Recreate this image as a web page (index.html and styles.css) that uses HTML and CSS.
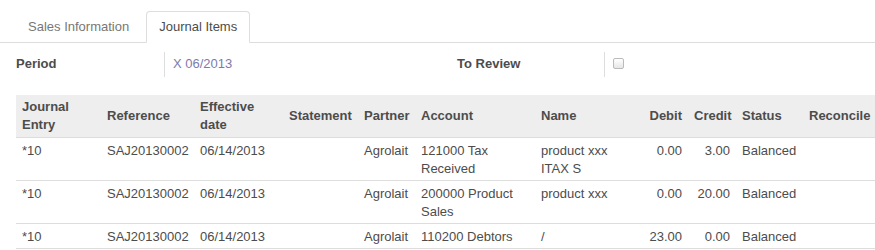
FILE: index.html
```html
<!DOCTYPE html>
<html lang="en">
<head>
  <meta charset="UTF-8">
  <title>Invoice - Journal Items</title>
  <link rel="stylesheet" href="styles.css">
</head>
<body>
  <ul class="tabs">
    <li><a href="#">Sales Information</a></li>
    <li class="active"><a href="#">Journal Items</a></li>
  </ul>

  <div class="fields">
    <div class="label">Period</div>
    <div class="value value-wide"><a href="#">X 06/2013</a></div>
    <div class="label label-second">To Review</div>
    <div class="value"><input type="checkbox" class="check" /></div>
  </div>

  <table class="grid">
    <colgroup>
      <col style="width: 85px">
      <col style="width: 93px">
      <col style="width: 89px">
      <col style="width: 75px">
      <col style="width: 57px">
      <col style="width: 120px">
      <col style="width: 105px">
      <col style="width: 48px">
      <col style="width: 48px">
      <col style="width: 67px">
      <col style="width: 72px">
    </colgroup>
    <thead>
      <tr>
        <th>Journal Entry</th>
        <th>Reference</th>
        <th>Effective date</th>
        <th>Statement</th>
        <th>Partner</th>
        <th>Account</th>
        <th>Name</th>
        <th class="num">Debit</th>
        <th class="num">Credit</th>
        <th>Status</th>
        <th>Reconcile</th>
      </tr>
    </thead>
    <tbody>
      <tr>
        <td>*10</td>
        <td>SAJ20130002</td>
        <td>06/14/2013</td>
        <td></td>
        <td>Agrolait</td>
        <td>121000 Tax Received</td>
        <td>product xxx ITAX S</td>
        <td class="num">0.00</td>
        <td class="num">3.00</td>
        <td>Balanced</td>
        <td></td>
      </tr>
      <tr>
        <td>*10</td>
        <td>SAJ20130002</td>
        <td>06/14/2013</td>
        <td></td>
        <td>Agrolait</td>
        <td>200000 Product Sales</td>
        <td>product xxx</td>
        <td class="num">0.00</td>
        <td class="num">20.00</td>
        <td>Balanced</td>
        <td></td>
      </tr>
      <tr>
        <td>*10</td>
        <td>SAJ20130002</td>
        <td>06/14/2013</td>
        <td></td>
        <td>Agrolait</td>
        <td>110200 Debtors</td>
        <td>/</td>
        <td class="num">23.00</td>
        <td class="num">0.00</td>
        <td>Balanced</td>
        <td></td>
      </tr>
    </tbody>
  </table>
</body>
</html>
```

FILE: styles.css
```css
* {
  box-sizing: border-box;
}

html, body {
  margin: 0;
  padding: 0;
  background: #fff;
  overflow: hidden;
}

body {
  font-family: "Liberation Sans", Arial, sans-serif;
  font-size: 13px;
  line-height: 18px;
  color: #4c4c4c;
}

a {
  text-decoration: none;
}

/* tabs */

.tabs {
  list-style: none;
  margin: 11px 0 0 0;
  padding: 0 0 0 15px;
  display: flex;
  border-bottom: 1px solid #ddd;
}

.tabs li {
  margin: 0 4px -1px 0;
}

.tabs a {
  display: block;
  padding: 6px 12px;
  border: 1px solid transparent;
  border-radius: 4px 4px 0 0;
  color: #777;
}

.tabs .active a {
  color: #4c4c4c;
  background: #fff;
  border-color: #ddd #ddd transparent;
}

/* form fields */

.fields {
  display: flex;
  align-items: center;
  padding: 8px 0 0 16px;
  height: 34px;
}

.label {
  width: 148px;
  font-weight: bold;
  color: #4c4c4c;
}

.label-second {
  width: 147px;
}

.value {
  height: 25px;
  display: flex;
  align-items: center;
  padding-left: 8px;
  border-left: 1px solid #ddd;
}

.value-wide {
  width: 293px;
}

.value a {
  color: #7c7bad;
}

.check {
  appearance: none;
  -webkit-appearance: none;
  width: 11px;
  height: 11px;
  margin: 0 0 2px 0;
  border: 1px solid #bbb;
  border-radius: 2px;
  background: linear-gradient(#fff, #e6e6e6);
}

/* list */

.grid {
  margin: 18px 0 0 16px;
  width: 859px;
  table-layout: fixed;
  border-collapse: collapse;
}

.grid th,
.grid td {
  padding: 0 4px 0 6px;
  text-align: left;
  overflow: hidden;
}

.grid th {
  background: #eee;
  font-weight: bold;
  color: #4c4c4c;
  height: 42px;
  padding-top: 3px;
  padding-bottom: 3px;
  vertical-align: middle;
}

.grid td {
  vertical-align: top;
  padding-top: 4px;
  padding-bottom: 2px;
  border-top: 1px solid #ddd;
}

.grid tbody tr:last-child td {
  border-bottom: 1px solid #ddd;
}

.grid .num {
  text-align: right;
  padding-right: 6px;
}
```
